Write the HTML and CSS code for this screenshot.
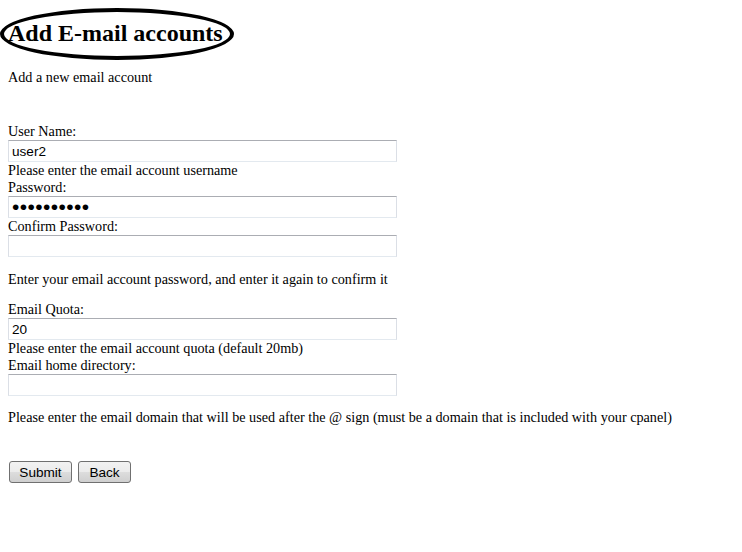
FILE: index.html
```html
<!DOCTYPE html>
<html>
<head>
<meta charset="utf-8">
<title>Add E-mail accounts</title>
<link rel="stylesheet" href="styles.css">
</head>
<body>
<div class="page">
  <h2 class="title">Add E-mail accounts</h2>
  <div class="intro">Add a new email account</div>
  <form class="form">
    <div class="label first">User Name:</div>
    <input class="field" type="text" value="user2">
    <div class="text">Please enter the email account username</div>
    <div class="label">Password:</div>
    <input class="field pass" type="password" value="abcdefghij">
    <div class="label">Confirm Password:</div>
    <input class="field" type="password" value="">
    <div class="text gap-a">Enter your email account password, and enter it again to confirm it</div>
    <div class="label gap">Email Quota:</div>
    <input class="field" type="text" value="20">
    <div class="text">Please enter the email account quota (default 20mb)</div>
    <div class="label">Email home directory:</div>
    <input class="field" type="text" value="">
    <div class="text gap">Please enter the email domain that will be used after the @ sign (must be a domain that is included with your cpanel)</div>
    <div class="buttons">
      <button class="btn submit" type="button">Submit</button>
      <button class="btn back" type="button">Back</button>
    </div>
  </form>
</div>
</body>
</html>
```

FILE: styles.css
```css
html, body {
  margin: 0;
  padding: 0;
  background: #ffffff;
}

body {
  font-family: "Liberation Serif", "Times New Roman", serif;
  font-size: 14.2px;
  color: #000000;
}

.page {
  padding: 8px 8px 0 8px;
  display: flex;
  flex-direction: column;
  align-items: flex-start;
}

.title {
  box-sizing: border-box;
  margin: 0 0 0 -8px;
  width: 234px;
  height: 52px;
  border: 4px solid #000000;
  border-radius: 50%;
  padding-left: 4px;
  font-size: 24px;
  font-weight: bold;
  line-height: 42px;
  white-space: nowrap;
}

.intro {
  margin-top: 9px;
  line-height: 17px;
}

.form {
  display: flex;
  flex-direction: column;
  align-items: flex-start;
  margin: 0;
}

.label, .text {
  line-height: 17px;
  white-space: nowrap;
}

.label.first {
  margin-top: 37px;
}

.gap {
  margin-top: 13px;
}

.gap-a {
  margin-top: 14px;
}

.field {
  box-sizing: border-box;
  width: 389px;
  height: 22px;
  margin: 0;
  padding: 0 3px;
  border: 1px solid #dbdfe6;
  border-top-color: #abadb3;
  border-bottom-color: #e3e9ef;
  border-radius: 0;
  font-family: "Liberation Sans", Arial, sans-serif;
  font-size: 13.6px;
  color: #000000;
  background: #ffffff;
  outline: none;
}

.field.pass {
  font-size: 21px;
  letter-spacing: 0.4px;
  padding-left: 3px;
}

.buttons {
  display: flex;
  gap: 6px;
  margin-top: 35px;
  margin-left: 1px;
}

.btn {
  box-sizing: border-box;
  height: 22px;
  margin: 0;
  padding: 0;
  border: 1px solid #707070;
  border-radius: 3px;
  background: linear-gradient(to bottom, #f2f2f2 0%, #ebebeb 50%, #dddddd 51%, #cfcfcf 100%);
  font-family: "Liberation Sans", Arial, sans-serif;
  font-size: 13.6px;
  color: #000000;
}

.submit {
  width: 63px;
}

.back {
  width: 53px;
}
```
